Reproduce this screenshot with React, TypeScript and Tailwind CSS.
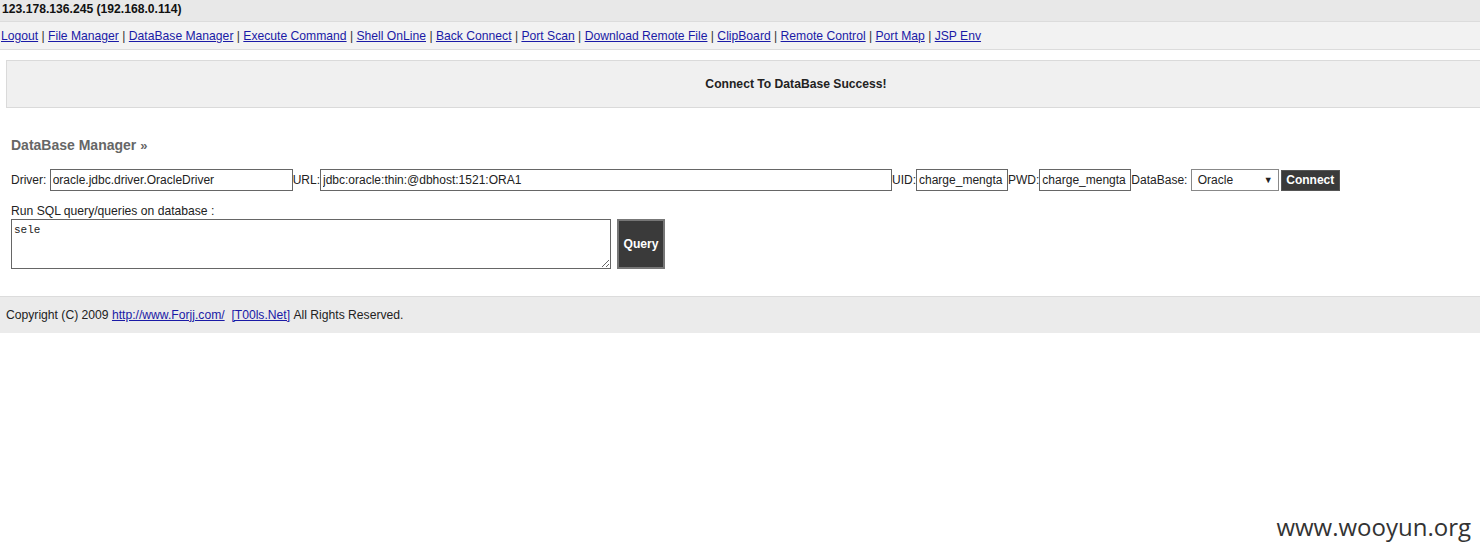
const links = [
  "Logout",
  "File Manager",
  "DataBase Manager",
  "Execute Command",
  "Shell OnLine",
  "Back Connect",
  "Port Scan",
  "Download Remote File",
  "ClipBoard",
  "Remote Control",
  "Port Map",
  "JSP Env",
];

export default function App() {
  return (
    <div className="relative w-[1480px] h-[558px] overflow-hidden bg-white text-[12.15px] text-[#222] font-['Liberation_Sans',Arial,sans-serif]">
      {/* host line */}
      <div className="h-[22px] bg-[#e8e8e8] border-b border-[#dcdcdc] pl-[2px] pt-[1px] font-bold leading-[16px] text-[#111]">
        123.178.136.245 (192.168.0.114)
      </div>

      {/* nav */}
      <div className="h-[28px] bg-[#f2f2f2] border-b border-[#dcdcdc] pl-[1px] pt-[6px] leading-[16px] whitespace-nowrap">
        {links.map((l, i) => (
          <span key={l}>
            {i > 0 && <span className="text-[#333]"> | </span>}
            <a href="#" className="text-[#1a1aa6] underline">
              {l}
            </a>
          </span>
        ))}
      </div>

      {/* status */}
      <div className="mt-[10px] ml-[6px] w-[1580px] h-[48px] bg-[#f0f0f0] border border-[#dadada] flex items-center justify-center font-bold text-[#222]">
        Connect To DataBase Success!
      </div>

      {/* db manager */}
      <div className="px-[11px] pt-[29px]">
        <h2 className="font-bold text-[14px] leading-[16px] text-[#666]">
          DataBase Manager <span className="text-[13px]">»</span>
        </h2>

        <div className="mt-[15px] flex items-center h-[22px] whitespace-nowrap text-[12px]">
          <span>Driver:&nbsp;</span>
          <input
            defaultValue="oracle.jdbc.driver.OracleDriver"
            className="w-[243px] h-[22px] border border-[#666] px-[2px] outline-none"
          />
          <span>URL:</span>
          <input
            defaultValue="jdbc:oracle:thin:@dbhost:1521:ORA1"
            className="w-[572px] h-[22px] border border-[#666] px-[2px] outline-none"
          />
          <span>UID:</span>
          <input
            defaultValue="charge_mengta"
            className="w-[92px] h-[22px] border border-[#666] px-[2px] outline-none"
          />
          <span>PWD:</span>
          <input
            defaultValue="charge_mengta"
            className="w-[92px] h-[22px] border border-[#666] px-[2px] outline-none"
          />
          <span>DataBase:&nbsp;</span>
          <div className="relative w-[88px] h-[22px] border border-[#888] bg-white flex items-center pl-[6px]">
            <span>Oracle</span>
            <span className="absolute right-[5px] top-[4px] text-[9px]">▼</span>
          </div>
          <button className="ml-[2px] w-[59px] h-[21px] bg-[#3a3a3a] border border-[#555] text-white font-bold">
            Connect
          </button>
        </div>

        <div className="mt-[13px] leading-[14px]">Run SQL query/queries on database :</div>
        <div className="mt-[1px] flex items-start gap-[6px]">
          <textarea
            defaultValue="sele"
            className="w-[600px] h-[50px] border border-[#666] px-[2px] pt-[3px] text-[11px] leading-[14px] font-['Liberation_Mono','Courier_New',monospace] outline-none"
          />
          <button className="w-[48px] h-[50px] bg-[#3a3a3a] border-2 border-[#777] text-white font-bold">
            Query
          </button>
        </div>
      </div>

      {/* footer */}
      <div className="mt-[27px] h-[37px] bg-[#ebebeb] border-t border-[#dcdcdc] pl-[6px] flex items-center whitespace-nowrap">
        Copyright (C) 2009&nbsp;
        <a href="#" className="text-[#1a1aa6] underline">http://www.Forjj.com/</a>
        &nbsp;&nbsp;
        <a href="#" className="text-[#1a1aa6] underline">[T00ls.Net]</a>
        &nbsp;All Rights Reserved.
      </div>

      {/* watermark */}
      <div className="absolute right-[9px] top-[512px] text-[24px] leading-[30px] text-[#333] font-['Open_Sans',sans-serif]">
        www.wooyun.org
      </div>
    </div>
  );
}
